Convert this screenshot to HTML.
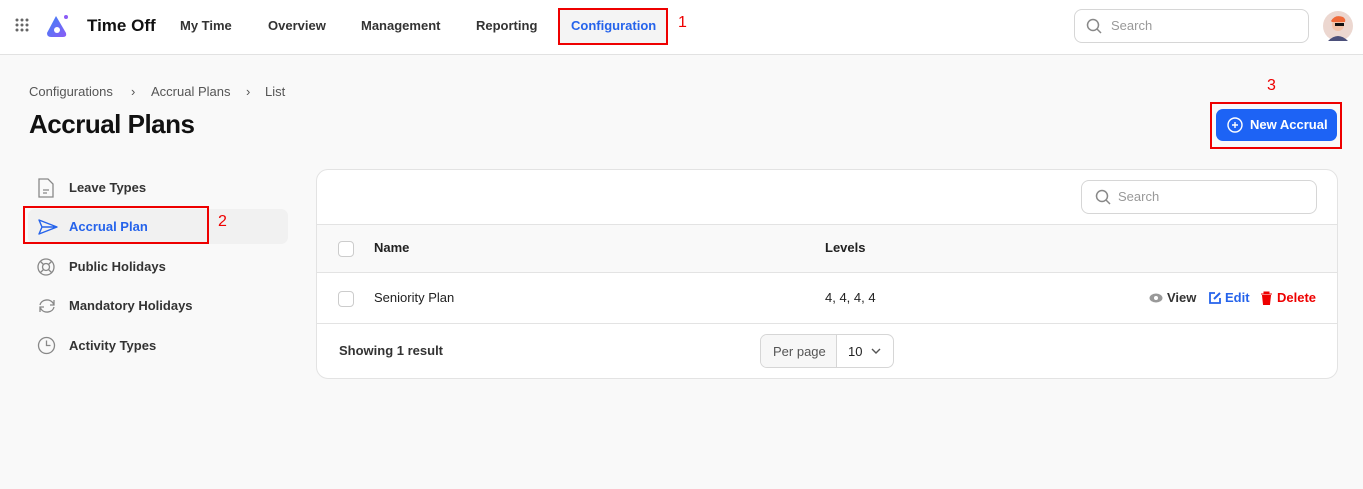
<!DOCTYPE html>
<html><head><meta charset="utf-8"><style>
*{box-sizing:border-box;margin:0;padding:0}
body{width:1363px;height:489px;background:#f9f9f9;font-family:"Liberation Sans",sans-serif;color:#222;position:relative;overflow:hidden;font-size:13px}
.top{position:absolute;left:0;top:0;width:1363px;height:55px;background:#fff;border-bottom:1px solid #e2e2e2}
.abs{position:absolute}
.nav{font-size:13px;font-weight:bold;color:#333;top:18px}
.red{border:2px solid #e00;position:absolute}
.rn{color:#e00;font-size:16px;position:absolute}
.side{position:absolute;left:69px;font-size:13px;font-weight:bold;color:#333}
.ico{position:absolute;left:37px}
.card{position:absolute;left:316px;top:169px;width:1022px;height:210px;background:#fff;border:1px solid #e3e3e3;border-radius:12px;overflow:hidden}
.hl{position:absolute;left:0;width:100%;height:1px;background:#e3e3e3}
.cb{position:absolute;left:21px;width:16px;height:16px;border:1px solid #ccc;border-radius:4px;background:#fff}
.bc{position:absolute;top:84px;color:#555}
</style></head><body>
<div class="top"></div>
<svg class="abs" style="left:15px;top:18px" width="16" height="16"><g fill="#666"><circle cx="2" cy="2" r="1.5"/><circle cx="7" cy="2" r="1.5"/><circle cx="12" cy="2" r="1.5"/><circle cx="2" cy="7" r="1.5"/><circle cx="7" cy="7" r="1.5"/><circle cx="12" cy="7" r="1.5"/><circle cx="2" cy="12" r="1.5"/><circle cx="7" cy="12" r="1.5"/><circle cx="12" cy="12" r="1.5"/></g></svg>
<svg class="abs" style="left:45px;top:13px" width="26" height="26"><defs><linearGradient id="g" x1="0" y1="0" x2="1" y2="1"><stop offset="0" stop-color="#3b82f6"/><stop offset="1" stop-color="#8b5cf6"/></linearGradient></defs><path d="M11 3 L2 20 Q2 24 6 24 L18 24 Q22 24 21 20 Z" fill="url(#g)"/><circle cx="12" cy="17" r="3" fill="#fff"/><circle cx="21" cy="4" r="2" fill="#8b5cf6"/></svg>
<div class="abs" style="left:87px;top:16px;font-size:17px;font-weight:bold;color:#111">Time Off</div>
<div class="abs nav" style="left:180px">My Time</div>
<div class="abs nav" style="left:268px">Overview</div>
<div class="abs nav" style="left:361px">Management</div>
<div class="abs nav" style="left:476px">Reporting</div>
<div class="abs" style="left:560px;top:10px;width:106px;height:33px;background:#f4f4f4"></div>
<div class="abs nav" style="left:571px;color:#2563eb">Configuration</div>
<div class="red" style="left:558px;top:8px;width:110px;height:37px"></div>
<div class="rn" style="left:678px;top:14px">1</div>
<div class="abs" style="left:1074px;top:9px;width:235px;height:34px;border:1px solid #d6d6d6;border-radius:8px;background:#fff"></div>
<svg class="abs" style="left:1086px;top:18px" width="16" height="16"><circle cx="7" cy="7" r="5.5" fill="none" stroke="#888" stroke-width="1.5"/><path d="M11 11l4 4" stroke="#888" stroke-width="1.5"/></svg>
<div class="abs" style="left:1111px;top:18px;color:#999">Search</div>
<svg class="abs" style="left:1323px;top:11px" width="30" height="30"><circle cx="15" cy="15" r="15" fill="#ecd7d0"/><path d="M5 30 Q15 20 25 30Z" fill="#4b4f7a"/><circle cx="15" cy="14" r="6" fill="#f3c2a8"/><path d="M8 10 Q12 3 20 6 Q23 8 22 11 L9 11Z" fill="#ef6a3a"/><rect x="12" y="12" width="9" height="3" fill="#111"/></svg>

<div class="bc" style="left:29px">Configurations</div>
<div class="bc" style="left:131px">›</div>
<div class="bc" style="left:151px">Accrual Plans</div>
<div class="bc" style="left:246px">›</div>
<div class="bc" style="left:265px">List</div>
<div class="abs" style="left:29px;top:109px;font-size:26px;font-weight:bold;color:#111;letter-spacing:-0.5px">Accrual Plans</div>
<div class="rn" style="left:1267px;top:77px">3</div>
<div class="abs" style="left:1216px;top:109px;width:121px;height:32px;background:#1d63f5;border-radius:7px"></div>
<svg class="abs" style="left:1227px;top:117px" width="16" height="16"><circle cx="8" cy="8" r="7" fill="none" stroke="#fff" stroke-width="1.4"/><path d="M8 5v6M5 8h6" stroke="#fff" stroke-width="1.4"/></svg>
<div class="abs" style="left:1250px;top:117px;color:#fff;font-weight:bold">New Accrual</div>
<div class="red" style="left:1210px;top:102px;width:132px;height:47px"></div>

<div class="abs" style="left:28px;top:209px;width:260px;height:35px;background:#f1f1f1;border-radius:7px"></div>
<svg class="ico" style="top:178px" width="18" height="20"><path d="M2 1h9l5 5v13H2z" fill="none" stroke="#888" stroke-width="1.3"/><path d="M6 12h6M6 15h4" stroke="#888" stroke-width="1.3"/></svg>
<div class="side" style="top:180px">Leave Types</div>
<svg class="ico" style="top:218px" width="22" height="18"><path d="M2 2l18 7-18 7 3-7z M5 9h15" fill="none" stroke="#2563eb" stroke-width="1.4" stroke-linejoin="round"/></svg>
<div class="side" style="top:219px;color:#2563eb">Accrual Plan</div>
<div class="red" style="left:23px;top:206px;width:186px;height:38px"></div>
<div class="rn" style="left:218px;top:213px">2</div>
<svg class="ico" style="top:258px" width="18" height="18"><circle cx="9" cy="9" r="8" fill="none" stroke="#888" stroke-width="1.3"/><circle cx="9" cy="9" r="3.5" fill="none" stroke="#888" stroke-width="1.3"/><path d="M3.5 3.5l3 3M14.5 3.5l-3 3M3.5 14.5l3-3M14.5 14.5l-3-3" stroke="#888" stroke-width="1.3"/></svg>
<div class="side" style="top:259px">Public Holidays</div>
<svg class="ico" style="top:297px" width="20" height="18"><path d="M3 8a7 6 0 0 1 13-2l1 2M17 10a7 6 0 0 1-13 2l-1-2M17 3v5h-4M3 15v-5h4" fill="none" stroke="#888" stroke-width="1.3"/></svg>
<div class="side" style="top:298px">Mandatory Holidays</div>
<svg class="ico" style="top:336px" width="19" height="19"><circle cx="9.5" cy="9.5" r="8" fill="none" stroke="#888" stroke-width="1.3"/><path d="M9.5 4.5v5h4" fill="none" stroke="#888" stroke-width="1.3"/></svg>
<div class="side" style="top:338px">Activity Types</div>

<div class="card">
<div class="abs" style="left:764px;top:10px;width:236px;height:34px;border:1px solid #d6d6d6;border-radius:8px"></div>
<svg class="abs" style="left:778px;top:19px" width="16" height="16"><circle cx="7" cy="7" r="5.5" fill="none" stroke="#888" stroke-width="1.5"/><path d="M11 11l4 4" stroke="#888" stroke-width="1.5"/></svg>
<div class="abs" style="left:801px;top:19px;color:#999">Search</div>
<div class="hl" style="top:54px"></div>
<div class="abs" style="left:0;top:55px;width:100%;height:48px;background:#f9f9f9"></div>
<div class="cb" style="top:71px"></div>
<div class="abs" style="left:57px;top:70px;font-weight:bold">Name</div>
<div class="abs" style="left:508px;top:70px;font-weight:bold">Levels</div>
<div class="hl" style="top:102px"></div>
<div class="cb" style="top:121px"></div>
<div class="abs" style="left:57px;top:120px">Seniority Plan</div>
<div class="abs" style="left:508px;top:120px">4, 4, 4, 4</div>
<svg class="abs" style="left:832px;top:123px" width="14" height="10"><ellipse cx="7" cy="5" rx="6.5" ry="4.5" fill="#999"/><circle cx="7" cy="5" r="2" fill="#fff"/></svg>
<div class="abs" style="left:850px;top:120px;color:#333;font-weight:bold">View</div>
<svg class="abs" style="left:891px;top:121px" width="14" height="14"><path d="M7 2H2v10h10V7" fill="none" stroke="#2563eb" stroke-width="1.8"/><path d="M6 8l6-6" stroke="#2563eb" stroke-width="2"/></svg>
<div class="abs" style="left:908px;top:120px;color:#2563eb;font-weight:bold">Edit</div>
<svg class="abs" style="left:943px;top:121px" width="13" height="14"><path d="M1 3h11M4 3V1h5v2M2.5 4.5l1 9h6l1-9z" fill="#e00" stroke="#e00" stroke-width="1"/></svg>
<div class="abs" style="left:960px;top:120px;color:#e00;font-weight:bold">Delete</div>
<div class="hl" style="top:153px"></div>
<div class="abs" style="left:22px;top:173px;color:#333;font-weight:bold">Showing 1 result</div>
<div class="abs" style="left:443px;top:164px;width:134px;height:34px;border:1px solid #d6d6d6;border-radius:7px;overflow:hidden">
<div class="abs" style="left:0;top:0;width:76px;height:32px;background:#f7f7f7;border-right:1px solid #d6d6d6"></div>
<div class="abs" style="left:12px;top:9px;color:#555">Per page</div>
<div class="abs" style="left:87px;top:9px">10</div>
<svg class="abs" style="left:110px;top:13px" width="10" height="7"><path d="M1 1l4 4 4-4" fill="none" stroke="#555" stroke-width="1.4"/></svg>
</div>
</div>
</body></html>
